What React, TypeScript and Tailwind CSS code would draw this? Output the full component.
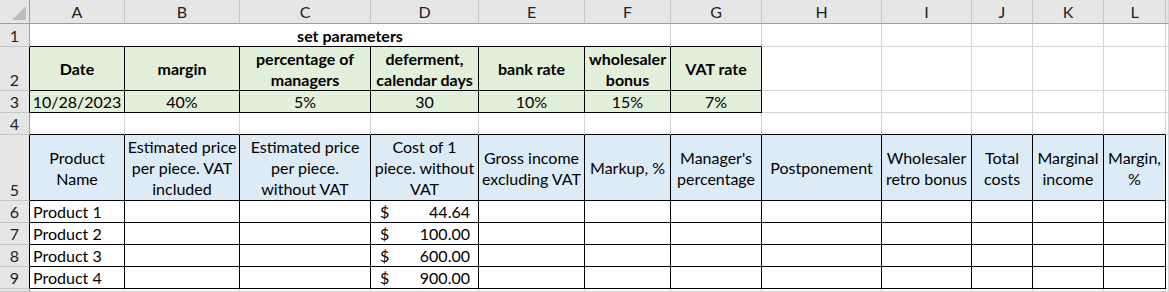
import React from "react";

// Border colour per side: g = gridline, k = black table border, h = header edge
const RIGHT = {
  g: "border-r-[#d4d4d4]",
  k: "border-r-black",
  h: "border-r-[#9f9f9f]",
  s: "border-r-[#c6c6c6]",
};
const BOTTOM = {
  g: "border-b-[#d4d4d4]",
  k: "border-b-black",
  h: "border-b-[#9f9f9f]",
  s: "border-b-[#c6c6c6]",
};

type Side = keyof typeof RIGHT;

interface CellProps {
  children?: React.ReactNode;
  r?: Side;
  b?: Side;
  className?: string;
}

function Cell({ children, r = "g", b = "g", className = "" }: CellProps) {
  return (
    <div
      className={`border-r border-b overflow-hidden whitespace-nowrap flex ${RIGHT[r]} ${BOTTOM[b]} ${className}`}
    >
      {children}
    </div>
  );
}

const colLetters = ["A", "B", "C", "D", "E", "F", "G", "H", "I", "J", "K", "L"];

function RowNum({ n, r = "h" }: { n?: number; r?: Side }) {
  return (
    <Cell
      r={r}
      b="s"
      className="bg-[#e6e6e6] items-end justify-center text-[#222] leading-[20px]"
    >
      {n}
    </Cell>
  );
}

const paramHeads: React.ReactNode[] = [
  "Date",
  "margin",
  <>percentage of<br />managers</>,
  <>deferment,<br />calendar days</>,
  "bank rate",
  <>wholesaler<br />bonus</>,
  "VAT rate",
];

const paramValues = ["10/28/2023", "40%", "5%", "30", "10%", "15%", "7%"];

const tableHeads: React.ReactNode[] = [
  <>Product<br />Name</>,
  <>Estimated price<br />per piece. VAT<br />included</>,
  <>Estimated price<br />per piece.<br />without VAT</>,
  <>Cost of 1<br />piece. without<br />VAT</>,
  <>Gross income<br />excluding VAT</>,
  "Markup, %",
  <>Manager's<br />percentage</>,
  "Postponement",
  <>Wholesaler<br />retro bonus</>,
  <>Total<br />costs</>,
  <>Marginal<br />income</>,
  <>Margin,<br />%</>,
];

const products = [
  { name: "Product 1", cost: "44.64" },
  { name: "Product 2", cost: "100.00" },
  { name: "Product 3", cost: "600.00" },
  { name: "Product 4", cost: "900.00" },
];

export default function App() {
  return (
    <div
      className="w-[1169px] h-[292px] overflow-hidden bg-white text-black text-[16px]"
      style={{ fontFamily: "Lato, 'Liberation Sans', sans-serif" }}
    >
      <div className="grid grid-cols-[30px_95px_115px_131px_108px_106px_86px_91px_120px_90px_61px_71px_62px_1fr] grid-rows-[24px_23px_44px_22px_22px_66px_22px_22px_22px_22px_1fr] h-full">
        {/* column headers */}
        <Cell r="h" b="h" className="bg-[#e6e6e6] items-end justify-end p-[3px]">
          <svg width="14" height="14" viewBox="0 0 14 14">
            <polygon points="14,0 14,14 0,14" fill="#bdbdbd" />
          </svg>
        </Cell>
        {colLetters.map((c) => (
          <Cell
            key={c}
            r="s"
            b="h"
            className="bg-[#e6e6e6] items-center justify-center text-[#222]"
          >
            {c}
          </Cell>
        ))}
        <Cell r="g" b="h" className="bg-[#e6e6e6]" />

        {/* row 1 */}
        <RowNum n={1} />
        <Cell b="k" className="col-span-6 items-end justify-center font-bold leading-[20px]">
          set parameters
        </Cell>
        <Cell b="k" />
        {Array.from({ length: 6 }).map((_, i) => (
          <Cell key={i} />
        ))}

        {/* row 2 */}
        <RowNum n={2} r="k" />
        {paramHeads.map((h, i) => (
          <Cell
            key={i}
            r="k"
            b="k"
            className="bg-[#e2efda] items-center justify-center text-center font-bold leading-[21px]"
          >
            <span>{h}</span>
          </Cell>
        ))}
        {Array.from({ length: 6 }).map((_, i) => (
          <Cell key={i} />
        ))}

        {/* row 3 */}
        <RowNum n={3} r="k" />
        {paramValues.map((v, i) => (
          <Cell
            key={i}
            r="k"
            b="k"
            className="bg-[#e2efda] items-end justify-center leading-[20px]"
          >
            {v}
          </Cell>
        ))}
        {Array.from({ length: 6 }).map((_, i) => (
          <Cell key={i} />
        ))}

        {/* row 4 */}
        <RowNum n={4} />
        {colLetters.map((c) => (
          <Cell key={c} b="k" />
        ))}
        <Cell />

        {/* row 5 */}
        <RowNum n={5} r="k" />
        {tableHeads.map((h, i) => (
          <Cell
            key={i}
            r="k"
            b="k"
            className="bg-[#ddebf7] items-center justify-center text-center leading-[21px]"
          >
            <span>{h}</span>
          </Cell>
        ))}
        <Cell />

        {/* rows 6-9 */}
        {products.map((p, ri) => (
          <React.Fragment key={p.name}>
            <RowNum n={ri + 6} r="k" />
            <Cell r="k" b="k" className="items-end px-[3px] leading-[20px]">
              {p.name}
            </Cell>
            <Cell r="k" b="k" />
            <Cell r="k" b="k" />
            <Cell r="k" b="k" className="items-end justify-between pl-[9px] pr-[8px] leading-[20px]">
              <span>$</span>
              <span>{p.cost}</span>
            </Cell>
            {Array.from({ length: 8 }).map((_, i) => (
              <Cell key={i} r="k" b="k" />
            ))}
            <Cell />
          </React.Fragment>
        ))}

        {/* trailing partial row */}
        <RowNum />
        {colLetters.map((c) => (
          <Cell key={c} />
        ))}
        <Cell />
      </div>
    </div>
  );
}
